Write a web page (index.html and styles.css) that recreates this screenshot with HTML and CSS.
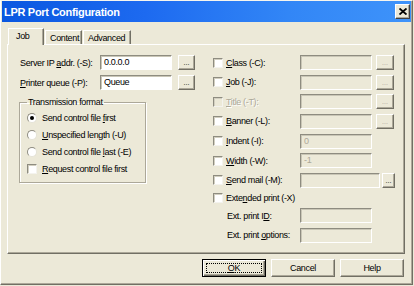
FILE: index.html
```html
<!DOCTYPE html>
<html>
<head>
<meta charset="utf-8">
<link rel="stylesheet" href="styles.css">
</head>
<body>
<div class="window">
  <div class="titlebar">
    <span class="title">LPR Port Configuration</span>
    <span class="close"><svg width="8" height="7" viewBox="0 0 8 7"><path d="M0.5 0.5 L7.5 6.5 M7.5 0.5 L0.5 6.5" stroke="#000" stroke-width="1.8" fill="none"/></svg></span>
  </div>
  <div class="tabs">
    <div class="tab active">Job</div>
    <div class="tab">Content</div>
    <div class="tab">Advanced</div>
  </div>
  <div class="panel">
    <div class="col-left">
      <div class="row">
        <span class="lbl">Server IP <u>a</u>ddr. (-S):</span>
        <span class="field">0.0.0.0</span>
        <span class="dots">...</span>
      </div>
      <div class="row">
        <span class="lbl"><u>P</u>rinter queue (-P):</span>
        <span class="field">Queue</span>
        <span class="dots">...</span>
      </div>
      <fieldset class="group">
        <legend>Transmission format</legend>
        <div class="opt"><span class="radio on"></span><span>Send control file <u>f</u>irst</span></div>
        <div class="opt"><span class="radio"></span><span><u>U</u>nspecified length (-U)</span></div>
        <div class="opt"><span class="radio"></span><span>Send control file <u>l</u>ast (-E)</span></div>
        <div class="opt"><span class="check"></span><span><u>R</u>equest control file first</span></div>
      </fieldset>
    </div>
    <div class="col-right">
      <div class="rrow">
        <span class="rl"><span class="check"></span><span><u>C</u>lass (-C):</span></span>
        <span class="field off"></span><span class="dots dis">...</span>
      </div>
      <div class="rrow">
        <span class="rl"><span class="check"></span><span><u>J</u>ob (-J):</span></span>
        <span class="field off"></span><span class="dots dis">...</span>
      </div>
      <div class="rrow">
        <span class="rl"><span class="check dis"></span><span class="distext"><u>T</u>itle (-T):</span></span>
        <span class="field off"></span><span class="dots dis">...</span>
      </div>
      <div class="rrow">
        <span class="rl"><span class="check"></span><span><u>B</u>anner (-L):</span></span>
        <span class="field off"></span><span class="dots dis">...</span>
      </div>
      <div class="rrow">
        <span class="rl"><span class="check"></span><span><u>I</u>ndent (-I):</span></span>
        <span class="field off">0</span>
      </div>
      <div class="rrow">
        <span class="rl"><span class="check"></span><span><u>W</u>idth (-W):</span></span>
        <span class="field off">-1</span>
      </div>
      <div class="rrow">
        <span class="rl"><span class="check"></span><span><u>S</u>end mail (-M):</span></span>
        <span class="field off wide"></span><span class="dots">...</span>
      </div>
      <div class="rrow short">
        <span class="rl"><span class="check"></span><span>Exte<u>n</u>ded print (-X)</span></span>
      </div>
      <div class="rrow">
        <span class="rl sub"><span>Ext. print I<u>D</u>:</span></span>
        <span class="field off"></span>
      </div>
      <div class="rrow">
        <span class="rl sub"><span>Ext. print <u>o</u>ptions:</span></span>
        <span class="field off"></span>
      </div>
    </div>
  </div>
  <div class="buttons">
    <div class="btn default"><span class="focus"><u>O</u>K</span></div>
    <div class="btn">Cancel</div>
    <div class="btn">Help</div>
  </div>
</div>
</body>
</html>
```
FILE: styles.css
```css
* { box-sizing: border-box; }
html, body { margin: 0; padding: 0; }
body {
  width: 414px;
  height: 286px;
  background: #ece9d8;
  font-family: "Liberation Sans", Arial, sans-serif;
  font-size: 9px;
  letter-spacing: -0.35px;
  color: #000;
  overflow: hidden;
}
u { text-decoration: underline; text-underline-offset: 1px; }
.window {
  width: 413px;
  height: 285px;
  background: #ece9d8;
  border-left: 1px solid #fff;
  border-top: 1px solid #f6f5ee;
  border-right: 1px solid #716f64;
  border-bottom: 1px solid #716f64;
  box-shadow: inset -1px -1px 0 #aca899;
  padding: 0 1px 0 1px;
  display: flex;
  flex-direction: column;
}
.titlebar {
  height: 21px;
  background: linear-gradient(to right, #0a57e0 0%, #1d6af0 35%, #3286f6 70%, #3e93fa 100%);
  display: flex;
  align-items: center;
  justify-content: space-between;
  padding: 0 1px 0 2px;
}
.title {
  color: #fff;
  font-weight: bold;
  font-size: 11px;
  letter-spacing: -0.3px;
}
.close {
  width: 15px;
  height: 15px;
  background: #ece9d8;
  border: 1px solid;
  border-color: #fff #404040 #404040 #fff;
  box-shadow: inset -1px -1px 0 #aca899;
  display: flex;
  align-items: center;
  justify-content: center;
}
.tabs {
  display: flex;
  align-items: flex-end;
  height: 22px;
  padding-left: 6px;
}
.tab {
  height: 14px;
  padding: 0 4px;
  border: 1px solid;
  border-bottom: none;
  border-color: #fff #716f64 transparent #fff;
  box-shadow: inset -1px 0 0 #aca899;
  display: flex;
  align-items: center;
  margin-left: 1px;
}
.tab.active {
  height: 17px;
  width: 36px;
  padding: 0 0 3px 7px;
  margin-bottom: -1px;
  background: #ece9d8;
  position: relative;
  z-index: 1;
  margin-left: 0;
}
.tab:nth-child(2) { width: 37px; }
.tab:nth-child(3) { width: 48px; }
.panel {
  margin-left: 5px;
  width: 398px;
  height: 210px;
  border: 1px solid;
  border-color: #fff #716f64 #716f64 #fff;
  box-shadow: inset -1px -1px 0 #aca899;
  display: flex;
  padding: 10px 0 0 12px;
}
.col-left {
  width: 193px;
  display: flex;
  flex-direction: column;
  gap: 5px;
}
.row {
  display: flex;
  align-items: center;
  height: 15px;
}
.lbl { width: 80px; }
.field {
  width: 72px;
  height: 15px;
  background: #fff;
  border: 1px solid;
  border-color: #8e8c80 #fff #fff #8e8c80;
  box-shadow: inset 1px 1px 0 #c9c6b6;
  padding: 1px 0 0 3px;
  line-height: 11px;
  white-space: nowrap;
}
.field.off { background: #ece9d8; color: #aca899; }
.field.wide { width: 80px; }
.dots {
  width: 17px;
  height: 15px;
  margin-left: 6px;
  border: 1px solid;
  border-color: #fff #716f64 #716f64 #fff;
  box-shadow: inset -1px -1px 0 #aca899;
  display: flex;
  justify-content: center;
  align-items: flex-end;
  font-size: 7px;
  letter-spacing: 0;
  line-height: 10px;
  padding-bottom: 1px;
}
.dots.dis { color: #aca899; margin-left: 4px; width: 18px; }
.col-right .dots:not(.dis) { margin-left: 2px; width: 13px; }
.group {
  margin: 2px 0 0 -1px;
  width: 127px;
  height: 86px;
  padding: 0 0 0 7px;
  border: 1px solid #aca899;
  box-shadow: inset 1px 1px 0 #fff, 1px 1px 0 #fff;
  display: flex;
  flex-direction: column;
}
.group legend {
  padding: 0 1px;
  margin-left: 0;
  line-height: 11px;
}
.opt {
  display: flex;
  align-items: center;
  height: 17px;
  gap: 5px;
}
.opt:first-of-type { margin-top: 1px; }
.radio {
  width: 10px;
  height: 10px;
  border-radius: 50%;
  background: #fff;
  border: 1px solid;
  border-color: #8e8c80 #e4e2d6 #e4e2d6 #8e8c80;
  position: relative;
}
.radio.on::after {
  content: "";
  position: absolute;
  left: 2px; top: 2px;
  width: 4px; height: 4px;
  border-radius: 50%;
  background: #000;
}
.check {
  width: 10px;
  height: 10px;
  background: #fff;
  border: 1px solid;
  border-color: #8e8c80 #f4f3ee #f4f3ee #8e8c80;
  box-shadow: inset 1px 1px 0 #d2cfc0;
  flex: none;
}
.check.dis { background: #ece9d8; }
.distext { color: #aca899; text-shadow: 1px 1px 0 #fff; }
.col-right {
  display: flex;
  flex-direction: column;
  gap: 4.66px;
}
.rrow {
  display: flex;
  align-items: center;
  height: 15px;
}
.rrow.short { height: 11px; }
.rl {
  width: 87px;
  display: flex;
  align-items: center;
  gap: 3px;
}
.rl.sub { padding-left: 14px; }
.buttons {
  display: flex;
  justify-content: flex-end;
  gap: 5px;
  padding: 5px 7px 0 0;
}
.btn {
  width: 64px;
  height: 18px;
  border: 1px solid;
  border-color: #fff #716f64 #716f64 #fff;
  box-shadow: inset -1px -1px 0 #aca899;
  display: flex;
  align-items: center;
  justify-content: center;
}
.btn.default {
  border: 1px solid #000;
  box-shadow: inset 1px 1px 0 #fff, inset -1px -1px 0 #716f64, inset -2px -2px 0 #aca899;
  padding: 3px;
}
.btn .focus {
  flex: 1;
  height: 100%;
  border: 1px dotted #000;
  display: flex;
  align-items: center;
  justify-content: center;
}
```
